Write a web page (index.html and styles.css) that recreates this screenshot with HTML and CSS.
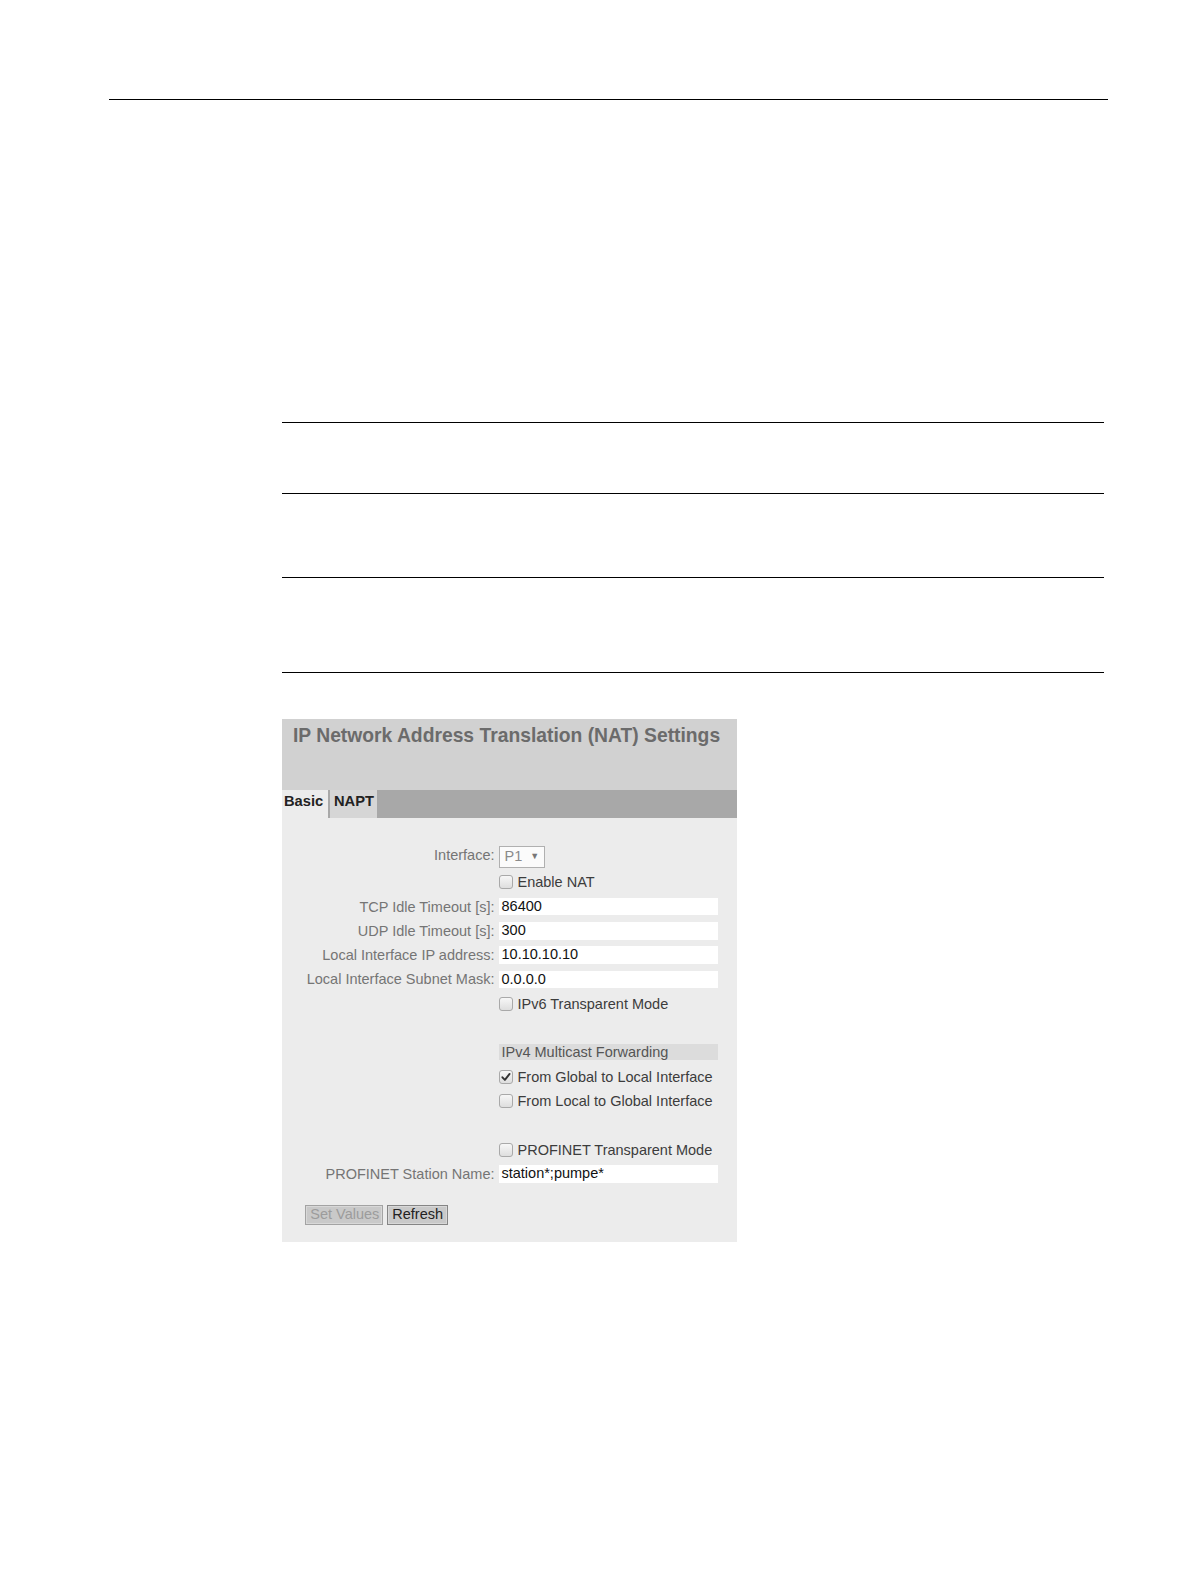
FILE: index.html
```html
<!DOCTYPE html>
<html>
<head>
<meta charset="utf-8">
<title>IP Network Address Translation (NAT) Settings</title>
<link rel="stylesheet" href="styles.css">
</head>
<body>
<div class="page">
  <div class="top-rule"></div>
  <div class="rules">
    <div class="rule r1"></div>
    <div class="rule r2"></div>
    <div class="rule r3"></div>
    <div class="rule r4"></div>
  </div>
  <div class="panel">
    <div class="panel-head">
      <h1 class="title">IP Network Address Translation (NAT) Settings</h1>
    </div>
    <div class="tabs">
      <div class="tab active">Basic</div>
      <div class="tab">NAPT</div>
    </div>
    <div class="panel-body">
      <div class="row row-first">
        <div class="label label-up">Interface:</div>
        <div class="field"><div class="select"><span>P1</span><span class="arrow">&#9660;</span></div></div>
      </div>
      <div class="row">
        <div class="label"></div>
        <div class="field"><span class="cb"></span><span class="cb-text">Enable NAT</span></div>
      </div>
      <div class="row">
        <div class="label">TCP Idle Timeout [s]:</div>
        <div class="field"><div class="input">86400</div></div>
      </div>
      <div class="row">
        <div class="label">UDP Idle Timeout [s]:</div>
        <div class="field"><div class="input">300</div></div>
      </div>
      <div class="row">
        <div class="label">Local Interface IP address:</div>
        <div class="field"><div class="input">10.10.10.10</div></div>
      </div>
      <div class="row">
        <div class="label">Local Interface Subnet Mask:</div>
        <div class="field"><div class="input">0.0.0.0</div></div>
      </div>
      <div class="row">
        <div class="label"></div>
        <div class="field"><span class="cb"></span><span class="cb-text">IPv6 Transparent Mode</span></div>
      </div>
      <div class="row spacer"></div>
      <div class="row">
        <div class="label"></div>
        <div class="field"><div class="group-head">IPv4 Multicast Forwarding</div></div>
      </div>
      <div class="row">
        <div class="label"></div>
        <div class="field"><span class="cb checked"><svg viewBox="0 0 14 14" width="14" height="14"><path d="M3.4 7.3 L5.9 9.9 L10.6 3.9" fill="none" stroke="#333" stroke-width="1.9" stroke-linecap="round" stroke-linejoin="round"/></svg></span><span class="cb-text">From Global to Local Interface</span></div>
      </div>
      <div class="row">
        <div class="label"></div>
        <div class="field"><span class="cb"></span><span class="cb-text">From Local to Global Interface</span></div>
      </div>
      <div class="row spacer"></div>
      <div class="row">
        <div class="label"></div>
        <div class="field"><span class="cb"></span><span class="cb-text">PROFINET Transparent Mode</span></div>
      </div>
      <div class="row">
        <div class="label">PROFINET Station Name:</div>
        <div class="field"><div class="input">station*;pumpe*</div></div>
      </div>
      <div class="buttons">
        <div class="btn disabled">Set Values</div>
        <div class="btn">Refresh</div>
      </div>
    </div>
  </div>
</div>
</body>
</html>
```
FILE: styles.css
```css
html, body {
  margin: 0;
  padding: 0;
  background: #ffffff;
}
body {
  font-family: "Liberation Sans", Arial, Helvetica, sans-serif;
}
.page {
  width: 1191px;
  padding-top: 99px;
  box-sizing: border-box;
}
.top-rule {
  margin: 0 0 0 109px;
  width: 999px;
  height: 0;
  border-top: 1px solid #000;
}
.rules {
  margin: 0 0 0 282px;
  width: 822px;
}
.rule {
  height: 0;
  border-top: 1px solid #000;
}
.r1 { margin-top: 322px; }
.r2 { margin-top: 70px; }
.r3 { margin-top: 83px; }
.r4 { margin-top: 94px; }

.panel {
  margin: 46px 0 0 282px;
  width: 455px;
  background: #ececec;
}
.panel-head {
  background: #d1d1d1;
  height: 71px;
  padding: 6px 0 0 11px;
  box-sizing: border-box;
}
.title {
  margin: 0;
  font-size: 19.3px;
  font-weight: bold;
  color: #6b6b6b;
  line-height: 22px;
  white-space: nowrap;
}
.tabs {
  display: flex;
  background: #a8a8a8;
  height: 27.5px;
  align-items: stretch;
}
.tab {
  font-size: 14.7px;
  font-weight: bold;
  color: #222;
  padding: 3px 0 0 2px;
  box-sizing: border-box;
  background: #d6d6d6;
  margin-right: 2px;
  line-height: 16px;
}
.tab.active {
  background: #ececec;
  width: 46px;
}
.tab:not(.active) {
  width: 47px;
  padding-left: 4px;
}
.panel-body {
  padding: 26.3px 19px 17.4px 0;
}
.row {
  display: flex;
  height: 24.3px;
  align-items: center;
}
.row-first {
  height: 26.3px;
}
.label {
  width: 212.5px;
  text-align: right;
  font-size: 14.5px;
  color: #757575;
  white-space: nowrap;
  flex: none;
}
.label-up {
  padding-bottom: 4px;
}
.field {
  margin-left: 4px;
  width: 219px;
  display: flex;
  align-items: center;
  font-size: 14.5px;
  color: #3c3c3c;
}
.input {
  width: 219px;
  height: 17.4px;
  background: #ffffff;
  box-sizing: border-box;
  padding-left: 3px;
  line-height: 17.4px;
  color: #111;
}
.select {
  width: 46.5px;
  height: 21.3px;
  box-sizing: border-box;
  border: 1px solid #b0b0b0;
  background: #fbfbfb;
  color: #8a8a8a;
  line-height: 19.3px;
  padding-left: 5px;
  display: flex;
  gap: 8px;
}
.arrow {
  font-size: 9px;
  color: #777;
}
.cb {
  width: 14px;
  height: 14px;
  box-sizing: border-box;
  border: 1px solid #a9a9a9;
  border-radius: 3px;
  background: linear-gradient(#f7f7f7, #dedede);
  flex: none;
  display: flex;
}
.cb svg {
  display: block;
  margin: -1px;
}
.cb-text {
  margin-left: 5px;
  white-space: nowrap;
  color: #3c3c3c;
}
.group-head {
  width: 219px;
  height: 16.2px;
  line-height: 16.2px;
  background: #dcdcdc;
  padding-left: 3px;
  box-sizing: border-box;
  color: #555;
}
.buttons {
  display: flex;
  gap: 4px;
  margin: 19.4px 0 0 23.3px;
}
.btn {
  height: 19.4px;
  box-sizing: border-box;
  border: 1px solid #858585;
  box-shadow: inset 0 0 0 1px #d8d8d8;
  background: #c9c9c9;
  font-size: 14.5px;
  line-height: 17.4px;
  padding: 0 0 0 4px;
  color: #222;
  white-space: nowrap;
  overflow: hidden;
}
.btn.disabled {
  width: 78px;
  color: #9c9c9c;
  border-color: #a3a3a3;
}
.btn:not(.disabled) {
  width: 61px;
}
```
